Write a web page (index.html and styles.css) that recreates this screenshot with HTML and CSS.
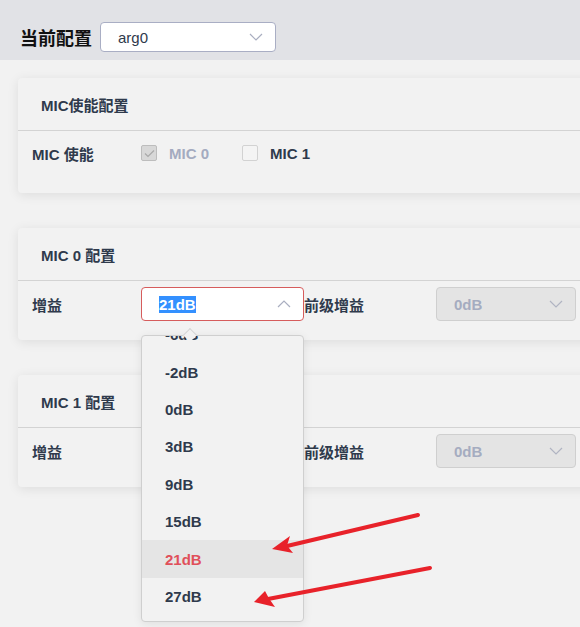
FILE: index.html
```html
<!DOCTYPE html>
<html lang="zh-CN">
<head>
<meta charset="utf-8">
<title>当前配置</title>
<link rel="stylesheet" href="styles.css">
</head>
<body>
<header class="topbar">
  <span class="top-label">当前配置</span>
  <div class="select top-select">
    <span class="select-text">arg0</span>
    <svg class="chev" width="14" height="8" viewBox="0 0 14 8"><polyline points="1,1 7,7 13,1" fill="none" stroke="#a9aec0" stroke-width="1.2"/></svg>
  </div>
</header>
<main class="content">
  <section class="card">
    <div class="card-head">MIC使能配置</div>
    <div class="card-body card-body--loose">
      <span class="label">MIC 使能</span>
      <div class="checks">
        <span class="check is-disabled">
          <span class="box box--checked"><svg width="11" height="9" viewBox="0 0 11 9"><polyline points="1,4.5 4,7.5 10,1.5" fill="none" stroke="#a9a9a9" stroke-width="1.2"/></svg></span>
          MIC 0
        </span>
        <span class="check">
          <span class="box"></span>
          MIC 1
        </span>
      </div>
    </div>
  </section>

  <section class="card">
    <div class="card-head">MIC 0 配置</div>
    <div class="card-body">
      <span class="label">增益</span>
      <div class="select-wrap">
        <div class="select is-open">
          <span class="select-text"><span class="sel-hl">21dB</span></span>
          <svg class="chev" width="14" height="8" viewBox="0 0 14 8"><polyline points="1,7 7,1 13,7" fill="none" stroke="#a9aec0" stroke-width="1.2"/></svg>
        </div>
        <div class="dropdown">
          <span class="caret"></span>
          <ul class="options">
            <li>-6dB</li>
            <li>-2dB</li>
            <li>0dB</li>
            <li>3dB</li>
            <li>9dB</li>
            <li>15dB</li>
            <li class="is-active">21dB</li>
            <li>27dB</li>
          </ul>
        </div>
      </div>
      <span class="label label--pre">前级增益</span>
      <div class="select is-disabled">
        <span class="select-text">0dB</span>
        <svg class="chev" width="14" height="8" viewBox="0 0 14 8"><polyline points="1,1 7,7 13,1" fill="none" stroke="#b0b4c2" stroke-width="1.2"/></svg>
      </div>
    </div>
  </section>

  <section class="card">
    <div class="card-head">MIC 1 配置</div>
    <div class="card-body">
      <span class="label">增益</span>
      <div class="select-wrap"></div>
      <span class="label label--pre">前级增益</span>
      <div class="select is-disabled">
        <span class="select-text">0dB</span>
        <svg class="chev" width="14" height="8" viewBox="0 0 14 8"><polyline points="1,1 7,7 13,1" fill="none" stroke="#b0b4c2" stroke-width="1.2"/></svg>
      </div>
    </div>
  </section>
</main>

<svg class="arrows" width="580" height="627" viewBox="0 0 580 627">
  <line x1="418" y1="515" x2="287" y2="546" stroke="#e8222a" stroke-width="4" stroke-linecap="round"/>
  <polygon points="272,549 290,536 287,545.5 293,553" fill="#e8222a"/>
  <line x1="430" y1="568" x2="268" y2="599" stroke="#e8222a" stroke-width="4" stroke-linecap="round"/>
  <polygon points="254,602 265,591 269,598.5 275,607" fill="#e8222a"/>
</svg>
</body>
</html>
```

FILE: styles.css
```css
html, body {
  margin: 0;
  padding: 0;
  overflow: hidden;
  width: 580px;
  height: 627px;
}

body {
  background: #f2f2f2;
  font-family: "Liberation Sans", "Noto Sans CJK SC", sans-serif;
  color: #2f3a4c;
  position: relative;
}

.topbar {
  height: 60px;
  background: #e1e2e6;
  display: flex;
  align-items: center;
  padding: 14px 0 0 20px;
  gap: 8px;
  box-sizing: border-box;
}

.top-label {
  font-size: 18px;
  font-weight: bold;
  color: #111;
}

.select {
  box-sizing: border-box;
  height: 34px;
  border: 1px solid #c6c9d3;
  border-radius: 4px;
  background: #fff;
  display: flex;
  align-items: center;
  justify-content: space-between;
  padding: 0 12px 0 17px;
  font-size: 15px;
  font-weight: bold;
}

.top-select {
  width: 176px;
  height: 30px;
  border-color: #a9aec4;
  font-weight: normal;
  color: #2f3a4c;
  padding-left: 17px;
}

.content {
  padding: 18px 0 0 18px;
  display: flex;
  flex-direction: column;
  gap: 35px;
}

.card {
  width: 620px;
  background: #f2f2f2;
  border-radius: 4px;
  box-shadow: 0 2px 12px rgba(0, 0, 0, 0.09);
}

.card-head {
  height: 52px;
  display: flex;
  align-items: center;
  padding-left: 23px;
  border-bottom: 1px solid #d3d3d3;
  font-size: 15px;
  font-weight: bold;
}

.card-body {
  display: grid;
  grid-template-columns: 109px 163px 132px 140px;
  align-items: center;
  padding: 6px 14px 19px;
  height: 34px;
  font-size: 15px;
  font-weight: bold;
}

.card-body--loose {
  padding: 5px 14px 23px;
}

.checks {
  grid-column: 2 / 5;
  display: flex;
  align-items: center;
  gap: 33px;
}

.check {
  display: flex;
  align-items: center;
  gap: 12px;
}

.check.is-disabled {
  color: #a4abc0;
}

.box {
  box-sizing: border-box;
  width: 16px;
  height: 16px;
  border: 1px solid #d2d2d2;
  border-radius: 2px;
  background: #f4f4f4;
  display: flex;
  align-items: center;
  justify-content: center;
}

.box--checked {
  background: #d8d8d8;
  border-color: #bdbdbd;
}

.select-wrap {
  position: relative;
  height: 34px;
}

.select.is-open {
  border-color: #d65c5c;
  height: 34px;
  width: 163px;
}

.sel-hl {
  background: #3390ff;
  color: #fff;
}

.label--pre {
  white-space: nowrap;
}

.select.is-disabled {
  background: #e4e4e4;
  border-color: #cfcfcf;
  color: #a5acc0;
}

.dropdown {
  position: absolute;
  left: 0;
  top: 48px;
  width: 163px;
  height: 287px;
  box-sizing: border-box;
  border: 1px solid #cfcfcf;
  border-radius: 4px;
  background: #f2f2f2;
  box-shadow: 0 2px 10px rgba(0, 0, 0, 0.08);
  z-index: 5;
}

.caret {
  position: absolute;
  left: 43px;
  top: -6px;
  width: 9px;
  height: 9px;
  background: #f2f2f2;
  border-left: 1px solid #d6d6d6;
  border-top: 1px solid #d6d6d6;
  transform: rotate(45deg);
  z-index: 2;
}

.options {
  list-style: none;
  margin: 0;
  padding: 0;
  height: 100%;
  overflow: hidden;
  position: relative;
}

.options li {
  height: 37.4px;
  display: flex;
  align-items: center;
  padding-left: 23px;
  font-size: 15px;
  font-weight: bold;
  color: #2f3a4c;
}

.options li:first-child {
  margin-top: -20px;
}

.options li.is-active {
  background: #e5e5e5;
  color: #e0505a;
}

.arrows {
  position: absolute;
  left: 0;
  top: 0;
  pointer-events: none;
  z-index: 10;
}
```
